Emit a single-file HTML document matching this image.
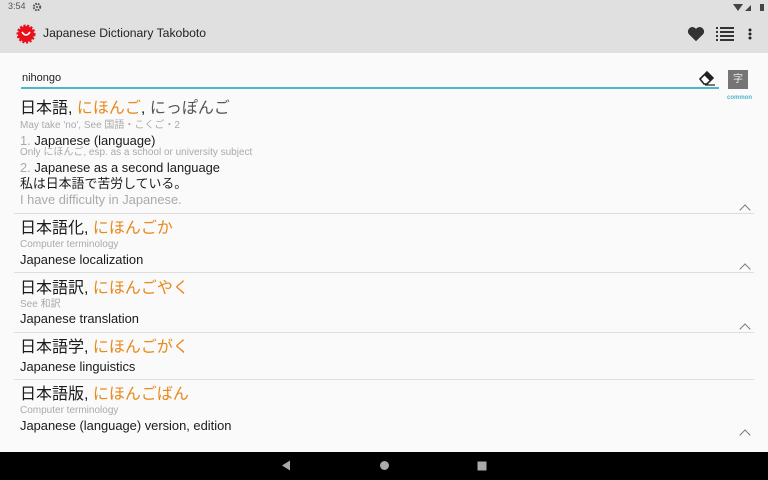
<!DOCTYPE html><html><head><meta charset="utf-8"><style>
*{margin:0;padding:0;box-sizing:border-box}
body{width:768px;height:480px;overflow:hidden;background:#fafafa;font-family:"Liberation Sans","Noto Sans CJK JP",sans-serif;position:relative;color:#1a1a1a}
.abs{position:absolute;white-space:nowrap}
#top{position:absolute;left:0;top:0;width:768px;height:53px;background:#e0e0e0}
#nav{position:absolute;left:0;top:452px;width:768px;height:28px;background:#000}
.h{font-size:16px;line-height:20px}
.o{color:#e8891a}
.s{font-size:10px;color:#aaa;line-height:12px}
.m{font-size:12.9px;line-height:15px}
.g{color:#aaa}
.d{position:absolute;left:14px;width:740px;height:1px;background:#ddd}
.c{position:absolute;left:741px;width:8px;height:8px;border-left:1.3px solid #777;border-top:1.3px solid #777;transform:rotate(45deg)}
</style></head><body>
<div id="top"></div>
<div class="abs" style="left:8px;top:1px;font-size:9px;color:#555">3:54</div>
<svg class="abs" style="left:32px;top:2px" width="10" height="10" viewBox="0 0 10 10"><circle cx="5" cy="5" r="3.2" fill="none" stroke="#555" stroke-width="2" stroke-dasharray="1.6 1"/><circle cx="5" cy="5" r="1" fill="#555"/></svg>
<svg class="abs" style="left:733px;top:3px" width="32" height="9" viewBox="0 0 32 9"><path d="M0 1 L10 1 L5 8Z" fill="#444"/><path d="M12 8 L18 8 L18 2Z" fill="#444"/><rect x="27" y="1" width="4" height="7" fill="#444"/></svg>
<svg class="abs" style="left:15px;top:24px" width="22" height="20" viewBox="0 0 22 20"><circle cx="11" cy="10" r="8" fill="#e8101a" stroke="#e8101a" stroke-width="3" stroke-dasharray="2 1.5"/><path d="M7 8 Q11 14 15 8" fill="none" stroke="#fff" stroke-width="1.6"/></svg>
<div class="abs" style="left:43px;top:26px;font-size:12.2px;color:#222">Japanese Dictionary Takoboto</div>
<svg class="abs" style="left:687px;top:26px" width="18" height="16" viewBox="0 0 24 22"><path d="M12 21 L2 11 A5.5 5.5 0 0 1 12 4 A5.5 5.5 0 0 1 22 11Z" fill="#333"/></svg>
<svg class="abs" style="left:716px;top:26px" width="18" height="16" viewBox="0 0 18 16"><g fill="#333"><rect x="0" y="1" width="2" height="2"/><rect x="4" y="1" width="14" height="2"/><rect x="0" y="5" width="2" height="2"/><rect x="4" y="5" width="14" height="2"/><rect x="0" y="9" width="2" height="2"/><rect x="4" y="9" width="14" height="2"/><rect x="0" y="13" width="2" height="2"/><rect x="4" y="13" width="14" height="2"/></g></svg>
<svg class="abs" style="left:748px;top:28px" width="4" height="12"><circle cx="2" cy="2" r="1.5" fill="#222"/><circle cx="2" cy="6" r="1.5" fill="#222"/><circle cx="2" cy="10" r="1.5" fill="#222"/></svg>
<div class="abs" style="left:22px;top:72px;font-size:11px;color:#222">nihongo</div>
<div class="abs" style="left:21px;top:87px;width:698px;height:1.5px;background:#4db5cc"></div>
<svg class="abs" style="left:697px;top:69px" width="20" height="18" viewBox="0 0 20 18"><path d="M3 10 L10 3 L16 9 L10 15 H7Z" fill="#fff" stroke="#222" stroke-width="1.6"/><path d="M10 3 L16 9 L13 12 L7 6Z" fill="#222"/><path d="M8 16 H18" stroke="#222" stroke-width="1.2"/></svg>
<div class="abs" style="left:728px;top:70px;width:20px;height:19px;background:#757575;color:#eee;font-size:10px;text-align:center;line-height:19px">字</div>
<div class="abs" style="left:727px;top:95px;font-size:6px;color:#4db5cc;font-weight:bold">common</div>

<div class="abs h" style="left:20px;top:99px">日本語, <span class="o">にほんご</span>, <span style="color:#555">にっぽんご</span></div>
<div class="abs s" style="left:20px;top:120px">May take 'no', See 国語・こくご・2</div>
<div class="abs m" style="left:20px;top:133px"><span class="g">1. </span>Japanese (language)</div>
<div class="abs s" style="left:20px;top:147px">Only にほんご, esp. as a school or university subject</div>
<div class="abs m" style="left:20px;top:160px"><span class="g">2. </span>Japanese as a second language</div>
<div class="abs m" style="left:20px;top:176px">私は日本語で苦労している。</div>
<div class="abs m g" style="left:20px;top:192px">I have difficulty in Japanese.</div>
<div class="c" style="top:206px"></div>
<div class="d" style="top:213px"></div>

<div class="abs h" style="left:20px;top:219px">日本語化, <span class="o">にほんごか</span></div>
<div class="abs s" style="left:20px;top:239px">Computer terminology</div>
<div class="abs m" style="left:20px;top:252px">Japanese localization</div>
<div class="c" style="top:265px"></div>
<div class="d" style="top:272px"></div>

<div class="abs h" style="left:20px;top:279px">日本語訳, <span class="o">にほんごやく</span></div>
<div class="abs s" style="left:20px;top:299px">See 和訳</div>
<div class="abs m" style="left:20px;top:311px">Japanese translation</div>
<div class="c" style="top:325px"></div>
<div class="d" style="top:332px"></div>

<div class="abs h" style="left:20px;top:338px">日本語学, <span class="o">にほんごがく</span></div>
<div class="abs m" style="left:20px;top:359px">Japanese linguistics</div>
<div class="d" style="top:379px"></div>

<div class="abs h" style="left:20px;top:385px">日本語版, <span class="o">にほんごばん</span></div>
<div class="abs s" style="left:20px;top:405px">Computer terminology</div>
<div class="abs m" style="left:20px;top:418px">Japanese (language) version, edition</div>
<div class="c" style="top:431px"></div>

<div id="nav"></div>
<svg class="abs" style="left:281px;top:460px" width="10" height="11"><path d="M9 0.5 L1 5.5 L9 10.5Z" fill="#aaa"/></svg>
<svg class="abs" style="left:379px;top:460px" width="11" height="11"><circle cx="5.5" cy="5.5" r="4.5" fill="#aaa"/></svg>
<svg class="abs" style="left:477px;top:461px" width="10" height="10"><rect x="0.5" y="0.5" width="9" height="9" fill="#aaa"/></svg>
</body></html>
